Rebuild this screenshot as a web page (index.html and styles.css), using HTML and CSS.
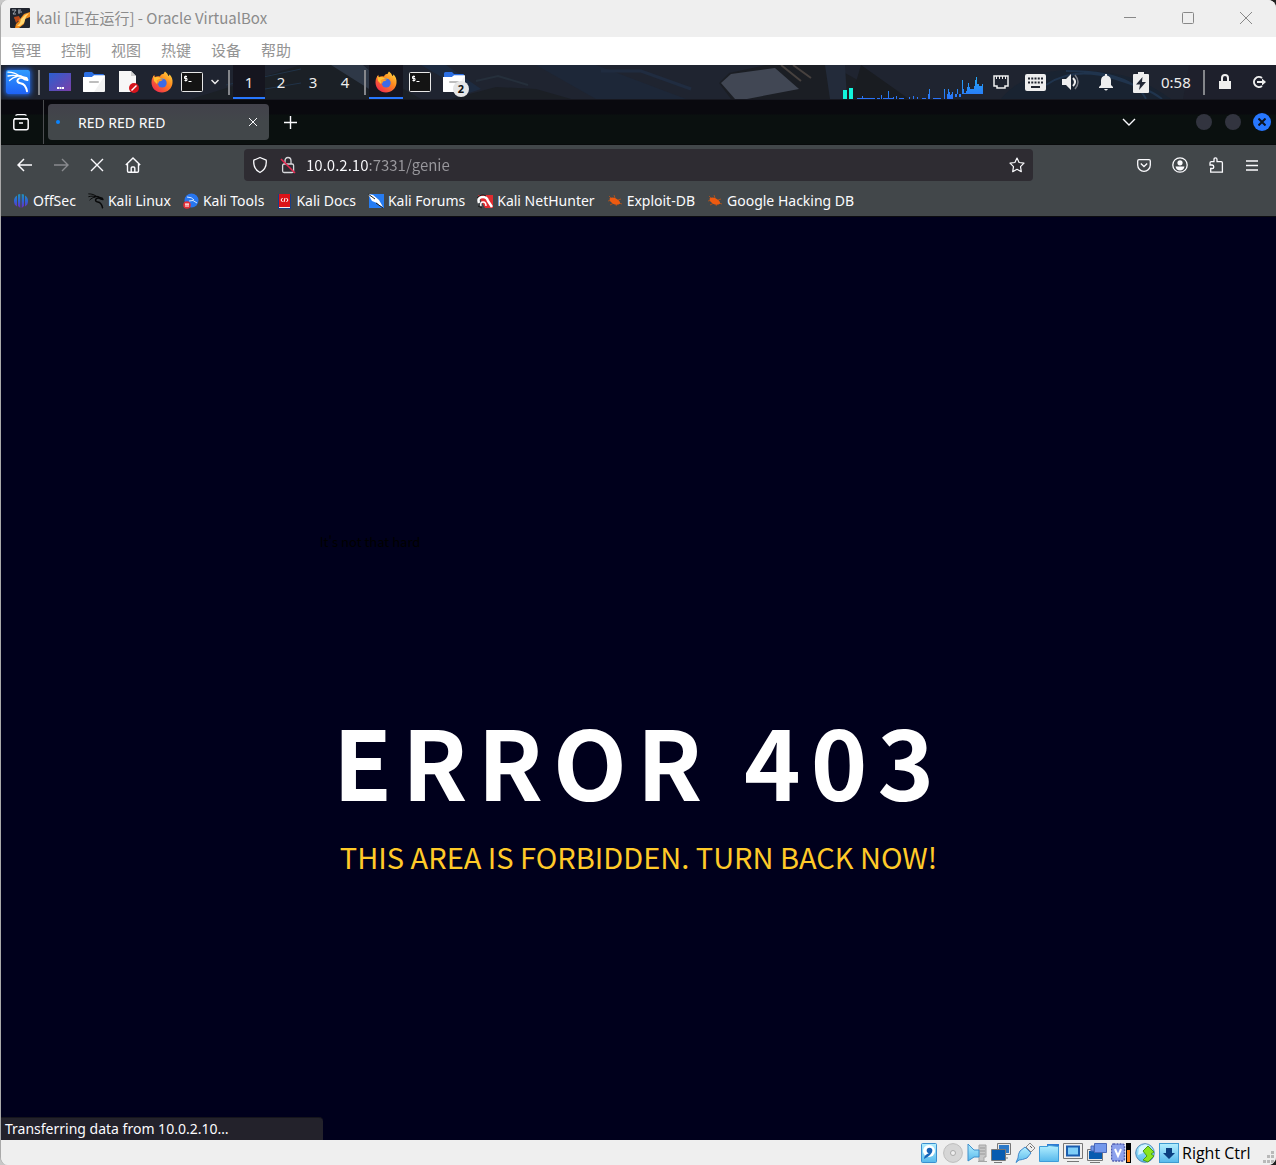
FILE: index.html
```html
<!DOCTYPE html>
<html lang="zh-CN">
<head>
<meta charset="utf-8">
<title>kali [正在运行] - Oracle VirtualBox</title>
<link rel="stylesheet" href="styles.css">
</head>
<body>
<svg class="defs" aria-hidden="true">
  <defs>
    <linearGradient id="desk" x2="1" y2="1"><stop offset="0" stop-color="#2b5fd0"/><stop offset="1" stop-color="#7b3fa8"/></linearGradient>
    <linearGradient id="kaliBg" x2="0" y2="1"><stop offset="0" stop-color="#2f9bff"/><stop offset="1" stop-color="#1f62f5"/></linearGradient>
    <linearGradient id="fox" x1="1" y1="0" x2="0.2" y2="1"><stop offset="0" stop-color="#ffe64a"/><stop offset="0.45" stop-color="#ff8a1e"/><stop offset="1" stop-color="#f0284e"/></linearGradient>
    <linearGradient id="off" x2="0" y2="1"><stop offset="0" stop-color="#1f93b8"/><stop offset="0.5" stop-color="#2f62d8"/><stop offset="1" stop-color="#6d2ac0"/></linearGradient>
    <linearGradient id="vb" x2="0" y2="1"><stop offset="0" stop-color="#b4efff"/><stop offset="1" stop-color="#57b9ec"/></linearGradient>
    <linearGradient id="bars" x2="0" y2="1"><stop offset="0" stop-color="#25a8f5"/><stop offset="1" stop-color="#2a72f8"/></linearGradient>
    <symbol id="firefox" viewBox="0 0 22 22">
      <path fill="url(#fox)" d="M14 0.5c2 1.5 3 3 3.3 4.6 1-.3 1.2-1 1.1-1.8C20.600 5.500 22 8.500 21.500 12 21 17.500 16.500 21.500 11 21.500 5 21.500.6 17.200.5 11.500.4 8 1.800 5.500 3.500 3.800c-.1 1 0 1.600.4 2.200C5.500 5 7.500 5.200 9 5.500 9.500 3.800 11 2.500 12.500 3c.3-1 .8-1.800 1.500-2.500z"/>
      <path fill="#ffbe32" d="M2 4.500 4 6.500c2-1 4-.4 5.500.5h4l-2.500 2-4 1.500L6 13 3 10z"/>
      <circle cx="11.200" cy="12" r="4.500" fill="#3c6be6"/>
      <path fill="#ff9a24" d="M5.500 9.500 8 8l4 .5c-1.500 1.600-2.700 1.700-4 2l-1 2.500z"/>
    </symbol>
    <symbol id="terminal" viewBox="0 0 22 20">
      <rect x=".5" y=".5" width="21" height="19" rx="1" fill="#141414" stroke="#e8e8e8"/>
      <path d="M6 4.500H3.500v2H6v2H3.500M4.800 3.500v6M7.500 9.500h3" fill="none" stroke="#fff"/>
    </symbol>
    <symbol id="folder" viewBox="0 0 22 20">
      <path fill="#2b6fe3" d="M1 1.500Q1 0 2.500 0H9l2 2h9q1 0 1 1v4H1z"/>
      <path fill="#f2f2f2" d="M0 5h9l2-1.500h11V19q0 1-1 1H1q-1 0-1-1z"/>
      <path fill="#fff" d="M0 5h9l2-1.500h11L11 20H1q-1 0-1-1z"/>
      <rect x="6" y="9" width="10" height="2" rx="1" fill="#bdbdbd"/>
    </symbol>
    <symbol id="dragon" viewBox="0 0 22 22">
      <path d="M1 1.200c4.500 0 8 1 11 3.800M1 5c3-.8 6-1 9-.2M2.500 9.500C4.500 7.500 7 6 10 5.500" fill="none" stroke="currentColor" stroke-width="1.300" stroke-linecap="round"/>
      <path d="M9 5c3-.8 5-.3 7 1.300l3.500.7 1 2-3-.7c-2-1.500-5-1.700-6.500 0-1.600 2 0 3.700 2.500 4 3.500.5 5.500 3 6.500 8" fill="none" stroke="currentColor" stroke-width="2" stroke-linecap="round" stroke-linejoin="round"/>
    </symbol>
    <symbol id="bug" viewBox="0 0 16 16">
      <path d="M2 3l3 3M7 2l1 3M1 8l4-1M3 12l4-2M9 13l1-2M15 11l-3-1M14 6l-3 1" stroke="#a5511f" fill="none"/>
      <path fill="#ee5a10" d="M2.500 5.500C5 3.800 8 4.500 10.500 6.500c1.500 1 3 2.500 2.500 4-1.500 1.500-4.500 1.500-6.500.5C4 9.500 2.500 8 2.500 5.500z"/>
    </symbol>
  </defs>
</svg>
<div class="window">
  <header class="titlebar">
    <svg class="app-icon" viewBox="0 0 20 20" width="20" height="20"><rect width="20" height="20" rx="1" fill="#20242e"/><path fill="#f08c1e" d="M4 10l5-1 1 2 4-5 6-2v5l-5 2-1 5-5 4H5l1-4 3-3z"/><path fill="#ffd873" d="M11 11l4-4 4-2-3 4-2 6-4 3H7l3-3z"/><path fill="#b8481a" d="M4 9l5-1 1 3-4 4z"/><path d="M2 2h4L3 6h3M8 2h3M8 4h4M9 2v4" stroke="#9da3ad" fill="none"/></svg>
    <h1 class="window-title">kali [正在运行] - Oracle VirtualBox</h1>
    <div class="window-buttons">
      <button aria-label="最小化"><svg width="12" height="12"><path d="M0 5.500h12" stroke="#888"/></svg></button>
      <button aria-label="最大化"><svg width="12" height="12"><rect x=".5" y=".5" width="11" height="11" rx="1" fill="none" stroke="#888"/></svg></button>
      <button aria-label="关闭"><svg width="12" height="12"><path d="M0 0l12 12M12 0L0 12" stroke="#888"/></svg></button>
    </div>
  </header>
  <nav class="menubar" aria-label="菜单">
    <button>管理</button><button>控制</button><button>视图</button><button>热键</button><button>设备</button><button>帮助</button>
  </nav>

  <section class="panel" aria-label="Panel">
    <svg class="wallpaper" viewBox="0 0 1275 34" preserveAspectRatio="none" aria-hidden="true">
      <rect width="1275" height="34" fill="#1f2430"/>
      <path d="M190 34 300 0h60l60 34z" fill="#1b2026"/><path d="M225 20l75-16M240 28l60-10" stroke="#213348" fill="none"/>
      <path d="M330 0h32l40 34h-18z" fill="#2e3847"/><path d="M420 0h25l35 24-12 4z" fill="#1d2b40"/>
      <path d="M450 34l45-12 40 2 35 10z" fill="#1b1f25"/><path d="M475 16l22-5 30 9" stroke="#252f3b" stroke-width="2" fill="none"/>
      <path d="M535 0l60 0 90 34h-90z" fill="#1d2738"/><path d="M600 6l40 0 50 18" stroke="#202c40" stroke-width="3" fill="none"/>
      <path d="M718 18 728 8 765 0h65l60 34H730z" fill="#1b1e24"/><path d="M720 18l10-9 44-6 24 21-52 10h-12z" fill="#414754"/>
      <path d="M780 0l20 16M792 0l18 13" stroke="#47413f" stroke-width="2"/><path d="M824 0l5 34h17l-2-34z" fill="#232b3a"/><path d="M860 0l48 34h-58z" fill="#191c21"/>
      <path d="M1000 34c20-24 50-32 90-28 40 2 60 14 80 28z" fill="#192331"/><path d="M1045 20c20-14 45-14 70-6s36 12 46 20M1065 6c40 0 70 8 80 28" stroke="#20344d" fill="none" stroke-width="2"/>
      <path d="M1188 0l-6 34h93V0z" fill="#1e202c"/>
    </svg>
    <button class="cell" aria-label="Applications"><svg class="kali-logo" width="24" height="24"><rect width="24" height="24" fill="url(#kaliBg)"/><g color="#fff"><use href="#dragon" width="22" height="22" x="1" y="1"/></g></svg></button>
    <span class="sep"></span>
    <button class="cell" aria-label="Show desktop"><svg width="22" height="18"><rect width="22" height="18" fill="url(#desk)"/><path d="M8 15h7" stroke="#fff" stroke-width="2" stroke-dasharray="2 .5"/></svg></button>
    <button class="cell" aria-label="Files"><svg width="22" height="20"><use href="#folder"/></svg></button>
    <button class="cell" aria-label="Text editor"><svg width="22" height="22" viewBox="0 0 22 22"><path fill="#f7f7f7" d="M2 0h12l5 5v16H2z"/><path fill="#cfcfcf" d="M14 0l5 5h-5z"/><circle cx="17" cy="17" r="5" fill="#d5141c"/><path d="M14.500 19.500l5-5" stroke="#fff" stroke-width="1.500"/></svg></button>
    <button class="cell" aria-label="Firefox"><svg width="22" height="22"><use href="#firefox"/></svg></button>
    <button class="cell cell-term" aria-label="Terminal"><svg width="22" height="20"><use href="#terminal"/></svg></button>
    <button class="cell cell-arrow" aria-label="More"><svg width="8" height="6"><path d="M.5 1L4 4.500 7.500 1" fill="none" stroke="#eee" stroke-width="1.500"/></svg></button>
    <span class="sep"></span>
    <button class="cell workspace active">1</button><button class="cell workspace">2</button><button class="cell workspace">3</button><button class="cell workspace">4</button>
    <span class="sep"></span>
    <button class="cell active" aria-label="Firefox window"><svg width="22" height="22"><use href="#firefox"/></svg></button>
    <button class="cell" aria-label="Terminal window"><svg width="22" height="20"><use href="#terminal"/></svg></button>
    <button class="cell files-group" aria-label="File windows"><svg width="22" height="20"><use href="#folder"/></svg><span class="badge">2</span></button>
    <svg class="load-graph" width="141" height="34" aria-label="CPU load"><path fill="#12f5dc" d="M0 25h4v9H0zM6 23h4v11H6z"/><path fill="url(#bars)" d="M14 33h5v-2h1v2h6v1h-12zM22 34v-1h3v1zM26 33h6v1h-6zM34 33h3v1h-3zM38 30h1v4h-1zM40 33h5v-7h1v7h4v-1h1v2H40zM53 31h1v3h-1zM56 33h5v1h-5zM66 32h1v2h-1zM70 31h1v3h-1zM74 32h1v2h-1zM79 33h4v1h-4zM85 29h1v-5h1v10h-2zM90 33h8v1h-8zM101 24h1v10h-1zM104 29h1v-5h1v3h1v3h1v-1h1v-2h1v7h-6zM112 32h2v-8h1v5h1v3h2v-3h1v-14h1v9h1v4h2v-2h1v-4h1v-4h1v4h1v2h4v-3h1v-6h1v-3h1v7h2v2h3v-2h1v10h-28z"/></svg>
    <button class="cell tray" aria-label="Network"><svg width="16" height="14"><path d="M1 1h14v10H12v2H4v-2H1z" fill="none" stroke="#eee" stroke-width="1.500"/><path d="M3.500 1v3M6.500 1v3M9.500 1v3M12.500 1v3" stroke="#eee"/></svg></button>
    <button class="cell tray" aria-label="Keyboard"><svg width="21" height="17"><rect width="21" height="17" rx="2" fill="#eee"/><path d="M3 4.500h15M3 8.500h15" stroke="#20242e" stroke-width="2" stroke-dasharray="2 1.250"/><path d="M6 13h9" stroke="#20242e" stroke-width="2"/></svg></button>
    <button class="cell tray" aria-label="Volume"><svg width="18" height="18"><path fill="#eee" d="M0 6h4l5-5v16l-5-5H0z"/><path d="M11 5q4 4 0 8" fill="none" stroke="#eee" stroke-width="2"/><path d="M13 2q6 7 0 14" fill="none" stroke="#777b84" stroke-width="1.500"/></svg></button>
    <button class="cell tray" aria-label="Notifications"><svg width="14" height="17"><path fill="#eee" d="M6 0h2v1.500q4 1 4 5V11l2 2v1H0v-1l2-2V6.500q0-4 4-5zM5 15h4q-2 3-4 0z"/></svg></button>
    <button class="cell tray" aria-label="Battery"><svg width="16" height="21"><path fill="#eee" d="M5 0h6v2h4q1 0 1 1v17q0 1-1 1H1q-1 0-1-1V3q0-1 1-1h4z"/><path fill="#222836" d="M9.500 5L3 12.500h4L6 18l7-8H9z"/></svg></button>
    <time class="clock">0:58</time>
    <span class="sep"></span>
    <button class="cell" aria-label="Lock"><svg width="14" height="16"><path fill="#eee" d="M1 7h12v8H1z"/><path d="M4 8V4q0-3 3-3t3 3v4" fill="none" stroke="#eee" stroke-width="2"/></svg></button>
    <button class="cell" aria-label="Log out"><svg width="16" height="14"><path d="M11 3a5 5 0 1 0 0 8" fill="none" stroke="#eee" stroke-width="2"/><path d="M6 7h6" stroke="#eee" stroke-width="2"/><path fill="#eee" d="M11 3.500L15 7l-4 3.500z"/></svg></button>
  </section>

  <section class="tabs" aria-label="Tabs">
    <button class="firefox-view" aria-label="Firefox View"><svg width="16" height="17"><path d="M2.500 1.500q1-.8 2-.8h7q1 0 2 .8" fill="none" stroke="#fbfbfe" stroke-width="1.300"/><rect x=".8" y="4.800" width="14.400" height="11" rx="2" fill="none" stroke="#fbfbfe" stroke-width="1.500"/><path d="M1 4.700h14M6 9h4" stroke="#fbfbfe" stroke-width="1.500"/></svg></button>
    <div class="tab"><span class="loading"></span><span class="tab-title">RED RED RED</span><button aria-label="Close tab"><svg width="10" height="10"><path d="M1 1l8 8M9 1L1 9" stroke="#fbfbfe"/></svg></button></div>
    <button class="new-tab" aria-label="New tab"><svg width="13" height="13"><path d="M6.500 0v13M0 6.500h13" stroke="#fbfbfe" stroke-width="1.400"/></svg></button>
    <button class="all-tabs" aria-label="List all tabs"><svg width="14" height="8"><path d="M1 1l6 6 6-6" fill="none" stroke="#fbfbfe" stroke-width="1.400"/></svg></button>
    <button class="dot" aria-label="Minimize"></button><button class="dot" aria-label="Maximize"></button>
    <button class="dot dot-close" aria-label="Close"><svg width="8" height="8"><path d="M.5.5l7 7M7.500.5l-7 7" stroke="#0c1420" stroke-width="2"/></svg></button>
  </section>

  <section class="toolbar" aria-label="Navigation">
    <button aria-label="Back"><svg width="16" height="14"><path d="M15 7H1.500M7 1L1 7l6 6" fill="none" stroke="#fbfbfe" stroke-width="1.500"/></svg></button>
    <button aria-label="Forward"><svg width="16" height="14"><path d="M1 7h13.500M9 1l6 6-6 6" fill="none" stroke="#898b8f" stroke-width="1.400"/></svg></button>
    <button aria-label="Stop"><svg width="14" height="14"><path d="M1 1l12 12M13 1L1 13" stroke="#fbfbfe" stroke-width="1.400"/></svg></button>
    <button aria-label="Home"><svg width="16" height="16"><path d="M.8 8L8 1l7.200 7M2.500 7v7q0 1.200 1.200 1.200h8.600q1.200 0 1.200-1.200V7M6.200 15v-4q0-1 1-1h1.600q1 0 1 1v4" fill="none" stroke="#fbfbfe" stroke-width="1.400"/></svg></button>
    <div class="urlbar">
      <svg width="16" height="18"><path d="M8 1.500l6.200 2.700c.6 5.800-1.700 10-6.200 12.300C3.500 14.200 1.200 10 1.800 4.200z" fill="none" stroke="#fbfbfe" stroke-width="1.300" stroke-linejoin="round"/></svg>
      <svg width="16" height="18"><rect x="2.600" y="8" width="11" height="8.500" rx="1.500" fill="none" stroke="#d8d8dc" stroke-width="1.300"/><path d="M5 8V5q0-3.500 3-3.500T11 5v3" fill="none" stroke="#d8d8dc" stroke-width="1.300"/><path d="M1 3l14 14" stroke="#e22850" stroke-width="1.600"/></svg>
      <input type="text" aria-label="Address" value="10.0.2.10:7331/genie">
      <svg width="16" height="16"><path d="M8 1l2.100 4.500 4.900.7-3.500 3.500.8 5L8 12.300 3.700 14.700l.8-5L1 6.200l4.900-.7z" fill="none" stroke="#fbfbfe" stroke-width="1.200" stroke-linejoin="round"/></svg>
    </div>
    <button aria-label="Pocket"><svg width="14" height="13"><path d="M2 .7h10q1.300 0 1.300 1.300v4a6.300 6.300 0 0 1-12.600 0V2Q.7.7 2 .7z" fill="none" stroke="#fbfbfe" stroke-width="1.300"/><path d="M3.800 4.500L7 7.500l3.200-3" fill="none" stroke="#fbfbfe" stroke-width="1.300"/></svg></button>
    <button aria-label="Account"><svg width="16" height="16"><circle cx="8" cy="8" r="7.200" fill="none" stroke="#fbfbfe" stroke-width="1.300"/><circle cx="8" cy="5.800" r="2.600" fill="#fbfbfe"/><path fill="#fbfbfe" d="M3.500 9.500h9q-.8 4-4.500 4t-4.500-4z"/></svg></button>
    <button aria-label="Extensions"><svg width="15" height="16"><path d="M1 8V6q0-1.300 1.300-1.300H5V2.500q0-1.700 1.500-1.700T8 2.500v2.200h4.200q1.200 0 1.200 1.300v9.200H1.700v-3.700h1.500q1.600 0 1.600-1.600T3.200 8z" fill="none" stroke="#fbfbfe" stroke-width="1.300"/></svg></button>
    <button aria-label="Menu"><svg width="12" height="11"><path d="M0 1h12M0 5.500h12M0 10h12" stroke="#fbfbfe" stroke-width="1.300"/></svg></button>
  </section>

  <nav class="bookmarks" aria-label="Bookmarks">
    <a href="#"><svg width="16" height="16"><path fill="url(#off)" d="M4 2.500v11Q1 12 1 8t3-5.500zM5 1.500l2.300-.5v14L5 13zM8.700 1l2.300.5V13l-2.300 2zM12 2.500q3 1.500 3 5.500t-3 5.500z"/></svg>OffSec</a>
    <a href="#"><svg width="16" height="16" color="#08090a"><use href="#dragon"/></svg>Kali Linux</a>
    <a href="#"><svg width="16" height="16"><circle cx="8.500" cy="7.500" r="7" fill="#2776f0"/><path d="M4 4q5 0 7 3M6 8q4-2 8 2" stroke="#d7eaff" fill="none"/><circle cx="4" cy="12" r="3.800" fill="#e32d36"/><path d="M2 11h4M3 11v3M5 11v3" stroke="#fff"/></svg>Kali Tools</a>
    <a href="#"><svg width="16" height="16"><path fill="#173e87" d="M2 1h13v15H2z"/><path fill="#db1218" d="M3 1h11v13H3z"/><path fill="#eee" d="M3 14h11v1H3z"/><path d="M6.500 5L5 7l1.500 2M10.500 5L12 7l-1.500 2M9 5L8 9" stroke="#fff" fill="none"/></svg>Kali Docs</a>
    <a href="#"><svg width="16" height="16"><path fill="#267cf2" d="M1 1h15v14H1z"/><path fill="#fff" d="M0 1l5 1 6 5 4 7-4-2-2-2-5-2z"/><path d="M0 1l7 5M8 10l7 5" stroke="#222"/></svg>Kali Forums</a>
    <a href="#"><svg width="16" height="16"><path fill="#e02c30" d="M1 2h15v13H8z"/><path d="M2 10q-2-6 4-6 4 0 5 4l4 6" fill="none" stroke="#fff" stroke-width="2.500"/><path d="M4 13q-1-4 2-4 3 0 3 4" fill="none" stroke="#fff" stroke-width="1.500"/><path d="M0 5q5-5 9-2M1 13l4 2" stroke="#1b1b1b" fill="none"/></svg>Kali NetHunter</a>
    <a href="#"><svg width="16" height="16"><use href="#bug"/></svg>Exploit-DB</a>
    <a href="#"><svg width="16" height="16"><use href="#bug"/></svg>Google Hacking DB</a>
  </nav>

  <main class="page">
    <div class="message">
      <p class="hint">It's not that hard</p>
      <h2>ERROR 403</h2>
      <p class="warning">THIS AREA IS FORBIDDEN. TURN BACK NOW!</p>
    </div>
    <output class="transfer">Transferring data from 10.0.2.10…</output>
  </main>

  <footer class="statusbar">
    <ul class="devices">
      <li><svg width="20" height="20"><rect x="2.500" y=".5" width="15" height="19" rx="1" fill="url(#vb)" stroke="#3a8fd0"/><circle cx="10" cy="8" r="6" fill="#fff"/><circle cx="10.500" cy="7.500" r="2.800" fill="#1764b8"/><path d="M13 8q0 4-8 8 0-4 5-6z" fill="#1764b8"/></svg></li>
      <li><svg width="20" height="20"><circle cx="10" cy="10" r="9.400" fill="#d6d6d6" stroke="#bdbdbd"/><circle cx="10" cy="10" r="2.500" fill="#eee" stroke="#aaa"/></svg></li>
      <li><svg width="20" height="20"><path fill="#c7c7c7" stroke="#a5a5a5" d="M12 2h7v12h-2v4h-5zM11 18.500h9"/><path d="M13 5h5M13 8h5M13 11h5" stroke="#999"/><path fill="url(#vb)" stroke="#3f8fcb" d="M1 1l6 6h5v7H7l-6 4z"/></svg></li>
      <li><svg width="20" height="20"><path fill="#e8e8e8" stroke="#777" d="M6.500.5h13v11h-13zM11 15h6"/><path fill="#2c79c8" d="M8 2h10v8H8z"/><path fill="#e8e8e8" stroke="#777" d="M.5 6.500h14v11H.5zM3 19.500h8"/><path fill="#075bb0" d="M1 7h13v10H1z"/></svg></li>
      <li><svg width="20" height="20"><path fill="#eee" stroke="#888" d="M11 4l4-4 5 5-4 4z"/><path fill="url(#vb)" stroke="#4088cc" d="M10 4l6 6-4 5q-5 2-8 2l-3 2.500L3 15q0-4 2-7z"/><path d="M15 3l2 2" stroke="#555"/></svg></li>
      <li><svg width="20" height="20"><path fill="#2d79d1" d="M8 1h12v5H8z"/><path fill="url(#vb)" stroke="#3e9cd9" d="M.5 3.500H8l2-1 9.500 1v15H.5z"/></svg></li>
      <li><svg width="20" height="20"><path fill="#eee" stroke="#777" d="M.5.5h19v15H.5zM4 18.500h12"/><path fill="#7fcef8" stroke="#1a5daf" stroke-width="2" d="M4 3.500h12v9H4z"/></svg></li>
      <li><svg width="20" height="20"><path fill="#e8e8e8" stroke="#777" d="M.5 6.500h15v11H.5zM3 19.500h10"/><path fill="#075bb0" d="M2 8h13v8H2z"/><path fill="#7398ec" stroke="#4a68b8" d="M7.500.5h12v9h-12zM4 3h3v5H4z"/></svg></li>
      <li><svg width="20" height="20"><rect x=".5" y="1" width="13" height="17" rx="2" fill="#8da2ed" stroke="#4f5cae" stroke-width="1.500" stroke-dasharray="2 1"/><path d="M4 6l3 7 3-7" fill="none" stroke="#fff" stroke-width="2"/><path d="M15 0h5v20h-5z"/><path fill="#ff8416" d="M16 7h3v12h-3z"/></svg></li>
      <li><svg width="20" height="20"><circle cx="10" cy="10" r="9.300" fill="url(#vb)" stroke="#4d86b8"/><path fill="#d7f5ff" d="M4 5q5-5 9-3L8 10l-5 2z"/><path fill="#8be51e" stroke="#4c9a17" d="M8 8l5-5 6 6-3 2 3 2-6 6-5-2 4-4z"/></svg></li>
      <li><svg width="20" height="20"><rect x=".5" y=".5" width="19" height="19" fill="url(#vb)" stroke="#3f9bd1"/><path fill="#0b3f80" d="M7 5h6v5h3l-6 6-6-6h3z"/></svg></li>
    </ul>
    <span class="host-key">Right Ctrl</span>
    <svg class="grip" width="14" height="14"><path fill="#b9b9b9" d="M9 0h3v3H9zM5 4h3v3H5zM9 4h3v3H9zM1 9h3v3H1zM5 9h3v3H5zM9 9h3v3H9z"/></svg>
  </footer>
</div>
</body>
</html>
```
FILE: styles.css
```css
* { box-sizing: border-box; }

body {
  margin: 0;
  background: linear-gradient(90deg, #c8c8c8 50%, #202020 50%);
  font-family: "Noto Sans", "Noto Sans CJK SC", sans-serif;
  font-size: 14px;
}

button {
  display: flex;
  align-items: center;
  justify-content: center;
  margin: 0;
  padding: 0;
  border: 0;
  background: none;
  color: inherit;
  font: inherit;
}

svg { display: block; flex: none; }
.defs { position: absolute; width: 0; height: 0; }

.window {
  display: flex;
  flex-direction: column;
  min-height: 100vh;
  overflow: hidden;
  border-left: 1px solid #a9a9a9;
  border-radius: 8px;
  background: #efefef;
}

/* Host window chrome */
.titlebar {
  display: flex;
  align-items: center;
  gap: 6px;
  height: 37px;
  padding: 0 1px 2px 9px;
  background: #efefef;
  color: #8b8b8b;
}
.window-title {
  flex: 1;
  margin: 0;
  font: 400 15px/20px "Noto Sans CJK SC", sans-serif;
}
.window-buttons { display: flex; }
.window-buttons button { width: 58px; height: 35px; }

.menubar {
  display: flex;
  gap: 20px;
  height: 28px;
  padding: 0 10px 2px;
  background: #fff;
  color: #949494;
  font: 15px/26px "Noto Sans CJK SC", sans-serif;
}

/* Guest desktop panel */
.panel {
  position: relative;
  display: flex;
  align-items: center;
  height: 34px;
  background: #1f2430;
  color: #eee;
  font-size: 15px;
}
.panel > * { position: relative; }
.panel > .wallpaper { position: absolute; inset: 0; width: 100%; height: 100%; }
.cell { width: 34px; height: 34px; flex: none; }
.cell-term { width: 26px; }
.cell-arrow { width: 20px; }
.workspace { width: 32px; }
.tray { width: 35px; }
.active { background: #15151f; box-shadow: inset 0 -2px #2777ff; }
.kali-logo { border-radius: 2px; box-shadow: 0 0 5px 1px #2269e8; }
.sep { flex: none; width: 2px; height: 25px; margin: 0 3px; background: #84868b; }
.badge {
  position: absolute;
  right: 2px;
  bottom: 2px;
  width: 16px;
  height: 16px;
  border-radius: 8px;
  background: #e6e6e6;
  color: #111;
  font: 700 11px/16px "Noto Sans", sans-serif;
}
.load-graph { width: 140px; margin-left: auto; }
.clock { width: 42px; padding-left: 3px; }

/* Browser tabs */
.tabs {
  display: flex;
  align-items: center;
  height: 46px;
  border-top: 1px solid #171820;
  border-bottom: 1px solid #080a0b;
  background: linear-gradient(#09090e 14px, #0a100f 15px);
  color: #fbfbfe;
}
.firefox-view { width: 43px; height: 44px; padding-right: 3px; border-right: 1px solid #4b4d50; }
.tab {
  display: flex;
  align-items: center;
  width: 221px;
  height: 36px;
  margin-left: 4px;
  padding: 0 10px 0 8px;
  border-radius: 4px;
  background: linear-gradient(#42414b, #42474a 50%);
}
.tab button { width: 12px; height: 20px; }
.loading { width: 4px; height: 4px; margin-right: 18px; border-radius: 2px; background: #0a84ff; }
.tab-title { flex: 1; }
.new-tab { width: 43px; height: 36px; }
.all-tabs { width: 36px; height: 36px; margin-left: auto; margin-right: 49px; }
.dot {
  width: 16px;
  height: 16px;
  margin-right: 13px;
  border-radius: 50%;
  background: #32343f;
}
.dot-close { width: 18px; height: 18px; margin: 0 5px 0 -1px; background: #2777ff; }

/* Browser navigation */
.toolbar {
  display: flex;
  align-items: center;
  height: 40px;
  padding: 0 6px;
  background: #42474a;
}
.toolbar button { width: 36px; height: 32px; flex: none; }
.urlbar {
  display: flex;
  align-items: center;
  flex: 1;
  gap: 12px;
  height: 32px;
  margin: 0 93px;
  padding: 0 8px;
  border-radius: 4px;
  background: #2e2c32;
}
.urlbar input {
  flex: 1;
  min-width: 0;
  margin-left: -2px;
  padding: 0;
  border: 0;
  outline: 0;
  background: linear-gradient(90deg, #fbfbfe 62px, #99989d 62px);
  background-clip: text;
  color: transparent;
  font: 15px/24px "Noto Sans CJK SC", sans-serif;
}

.bookmarks {
  display: flex;
  align-items: center;
  gap: 12px;
  height: 32px;
  padding: 0 12px;
  border-bottom: 1px solid #0c0c10;
  background: #42474a;
  white-space: nowrap;
}
.bookmarks a {
  display: flex;
  align-items: center;
  gap: 4px;
  color: #fbfbfe;
  line-height: 30px;
  text-decoration: none;
}

/* Web page */
.page {
  position: relative;
  flex: 1;
  padding-top: 313px;
  background: #00001c;
}
.message {
  width: 50%;
  margin: 0 auto;
  font-family: "Noto Sans CJK SC", sans-serif;
  text-align: center;
  white-space: nowrap;
}
.hint { margin: 0 0 146px; color: #000; font-size: 13px; line-height: 24px; text-align: left; }
.message h2 { margin: 0; color: #fff; font-size: 96px; font-weight: 700; line-height: 120px; letter-spacing: 10px; }
.warning { margin: 16px 0 0; color: #ffca28; font-size: 29px; line-height: 40px; }
.transfer {
  position: absolute;
  left: 0;
  bottom: 0;
  width: 322px;
  padding: 0 4px;
  border-top: 1px solid #15151c;
  border-radius: 0 4px 0 0;
  background: #23222b;
  color: #fbfbfe;
  line-height: 22px;
}

.statusbar {
  display: flex;
  align-items: center;
  height: 25px;
  background: #efefef;
}
.devices { display: flex; margin: 0 0 0 auto; padding: 0; list-style: none; }
.devices li { display: flex; justify-content: center; width: 24px; }
.host-key { width: 81px; padding-left: 1px; color: #000; font: 16px/24px "Open Sans", sans-serif; white-space: nowrap; }
.grip { align-self: flex-end; }
```
